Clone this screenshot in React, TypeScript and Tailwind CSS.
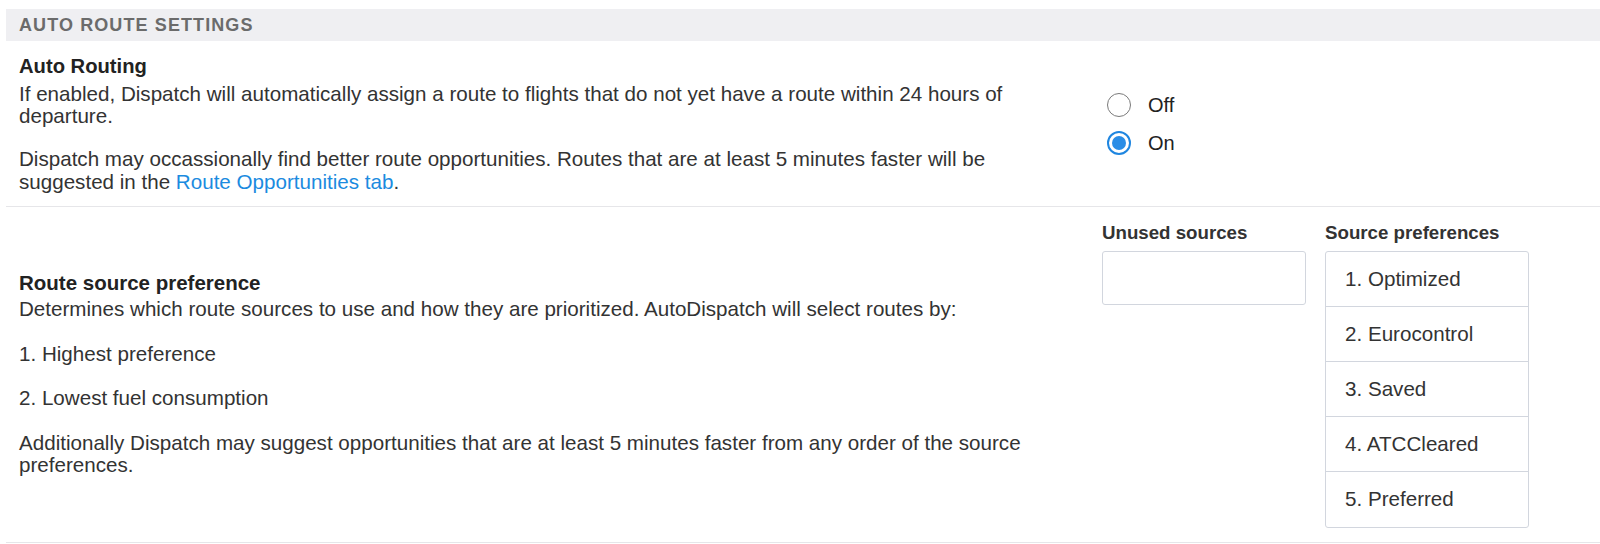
import React, { useState } from "react";

const sources = ["Optimized", "Eurocontrol", "Saved", "ATCCleared", "Preferred"];

const Radio = ({ checked, label, onClick }: { checked: boolean; label: string; onClick: () => void }) => (
  <button onClick={onClick} className="flex h-[38px] items-center gap-[17px] text-left">
    {checked ? (
      <span className="flex h-[24px] w-[24px] items-center justify-center rounded-full border-2 border-[#1f86e0] bg-white">
        <span className="h-[14px] w-[14px] rounded-full bg-[#2a8de6]" />
      </span>
    ) : (
      <span className="h-[24px] w-[24px] rounded-full border-[1.5px] border-[#7a7a7a] bg-white" />
    )}
    <span className="text-[20px] leading-[22px] text-[#222]">{label}</span>
  </button>
);

export default function App() {
  const [autoRoute, setAutoRoute] = useState(true);

  return (
    <div className="min-h-screen bg-white pl-[6px] pt-[9px] font-['Liberation_Sans',Arial,sans-serif] text-[#333]">
      {/* section header */}
      <div className="h-[32px] bg-[#efeff2] pl-[13px] text-[18px] font-bold uppercase leading-[32px] tracking-[1.1px] text-[#6b6b6b]">
        Auto Route Settings
      </div>

      {/* auto routing */}
      <div className="flex border-b border-[#e6e6e9]">
        <div className="w-[1096px] shrink-0 pb-[13px] pl-[13px] pr-[48px] pt-[14px]">
          <h2 className="text-[20.2px] font-bold leading-[22px] text-[#222]">Auto Routing</h2>
          <p className="mt-[6px] text-[20.6px] leading-[22px]">
            If enabled, Dispatch will automatically assign a route to flights that do not yet have a route within 24 hours of
            departure.
          </p>
          <p className="mt-[21px] text-[20.6px] leading-[22.5px]">
            Dispatch may occassionally find better route opportunities. Routes that are at least 5 minutes faster will be
            suggested in the <a className="text-[#1b8be0]">Route Opportunities tab</a>.
          </p>
        </div>
        <div className="flex flex-col justify-center pl-[5px]">
          <Radio checked={!autoRoute} label="Off" onClick={() => setAutoRoute(false)} />
          <Radio checked={autoRoute} label="On" onClick={() => setAutoRoute(true)} />
        </div>
      </div>

      {/* route source preference */}
      <div className="flex border-b border-[#e6e6e9]">
        <div className="flex w-[1096px] shrink-0 flex-col justify-center pl-[13px] pr-[48px]">
          <h2 className="text-[20.5px] font-bold leading-[22px] text-[#222]">Route source preference</h2>
          <p className="mt-[4px] text-[20.6px] leading-[22.5px]">
            Determines which route sources to use and how they are prioritized. AutoDispatch will select routes by:
          </p>
          <p className="mt-[22px] text-[20.6px] leading-[22.5px]">1. Highest preference</p>
          <p className="mt-[22px] text-[20.6px] leading-[22.5px]">2. Lowest fuel consumption</p>
          <p className="mt-[22px] text-[20.6px] leading-[22.5px]">
            Additionally Dispatch may suggest opportunities that are at least 5 minutes faster from any order of the source
            preferences.
          </p>
        </div>
        <div className="flex gap-[19px] pb-[14px] pt-[15px]">
          <div className="w-[204px]">
            <div className="text-[18.7px] font-bold leading-[22px] text-[#333]">Unused sources</div>
            <div className="mt-[7px] h-[54px] rounded-[3px] border border-[#d2d6de]" />
          </div>
          <div className="w-[204px]">
            <div className="text-[18.7px] font-bold leading-[22px] text-[#333]">Source preferences</div>
            <div className="mt-[7px] divide-y divide-[#d2d6de] rounded-[3px] border border-[#d2d6de]">
              {sources.map((s, i) => (
                <div key={s} className="flex h-[55px] items-center pl-[19px] text-[20.6px] text-[#333]">
                  {i + 1}. {s}
                </div>
              ))}
            </div>
          </div>
        </div>
      </div>
    </div>
  );
}
